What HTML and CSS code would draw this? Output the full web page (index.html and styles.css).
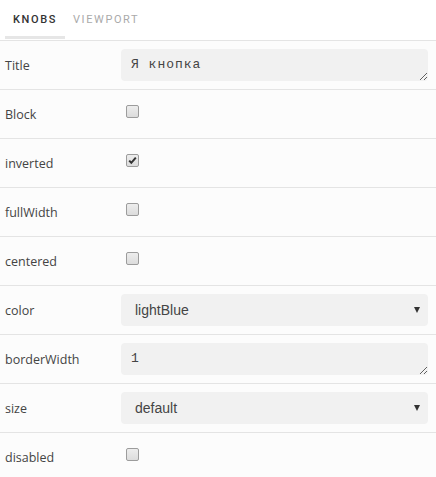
FILE: index.html
```html
<!DOCTYPE html>
<html>
<head>
<meta charset="utf-8">
<link rel="stylesheet" href="styles.css">
</head>
<body>
<div class="panel">
  <div class="tabs">
    <div class="tab active">KNOBS</div>
    <div class="tab">VIEWPORT</div>
  </div>
  <div class="knobs">
    <div class="row">
      <label class="label">Title</label>
      <div class="field"><textarea class="text" rows="1">Я кнопка</textarea></div>
    </div>
    <div class="row">
      <label class="label">Block</label>
      <div class="field"><span class="check"></span></div>
    </div>
    <div class="row">
      <label class="label">inverted</label>
      <div class="field"><span class="check checked"><svg viewBox="0 0 11 11" width="11" height="11"><path d="M2.2 5.6 L4.3 7.8 L8.8 2.6" fill="none" stroke="#333" stroke-width="2"/></svg></span></div>
    </div>
    <div class="row">
      <label class="label">fullWidth</label>
      <div class="field"><span class="check"></span></div>
    </div>
    <div class="row">
      <label class="label">centered</label>
      <div class="field"><span class="check"></span></div>
    </div>
    <div class="row">
      <label class="label">color</label>
      <div class="field"><div class="select"><span>lightBlue</span><span class="arrow"></span></div></div>
    </div>
    <div class="row">
      <label class="label">borderWidth</label>
      <div class="field"><textarea class="text" rows="1">1</textarea></div>
    </div>
    <div class="row">
      <label class="label">size</label>
      <div class="field"><div class="select"><span>default</span><span class="arrow"></span></div></div>
    </div>
    <div class="row">
      <label class="label">disabled</label>
      <div class="field"><span class="check"></span></div>
    </div>
  </div>
</div>
</body>
</html>
```

FILE: styles.css
```css
html, body {
  margin: 0;
  padding: 0;
  background: #fff;
}
.panel {
  width: 436px;
  font-family: "Open Sans", "Noto Sans", sans-serif;
}
.tabs {
  display: flex;
  height: 40px;
  padding-left: 5px;
  box-sizing: border-box;
}
.tab {
  height: 39px;
  box-sizing: border-box;
  padding: 13px 8px 0 8px;
  font-family: "Roboto", "Liberation Sans", sans-serif;
  font-size: 11px;
  font-weight: 400;
  letter-spacing: 1.6px;
  color: #aaa;
  border-bottom: 3px solid transparent;
}
.tab.active {
  color: #333;
  font-weight: 500;
  border-bottom-color: #e6e6e6;
  width: 60px;
}
.knobs {
  background: #fcfcfc;
}
.row {
  display: flex;
  align-items: center;
  height: 49px;
  box-sizing: border-box;
  border-top: 1px solid #e4e4e4;
}
.label {
  width: 121px;
  padding-left: 5px;
  box-sizing: border-box;
  font-size: 12.5px;
  color: #444;
}
.field {
  width: 307px;
  display: flex;
  align-items: center;
}
.text {
  display: block;
  width: 307px;
  height: 32px;
  box-sizing: border-box;
  border: none;
  border-radius: 4px;
  background: #f1f1f1;
  padding: 8px 10px;
  font-family: "Liberation Mono", "DejaVu Sans Mono", monospace;
  font-size: 13px;
  letter-spacing: 1px;
  color: #444;
  outline: none;
  resize: vertical;
  margin-top: -1px;
}
.check {
  display: inline-flex;
  align-items: center;
  justify-content: center;
  width: 11px;
  height: 11px;
  margin-left: 5px;
  margin-top: -5px;
  border: 1px solid #9c9c9c;
  border-radius: 2px;
  background: linear-gradient(#ededed, #dcdcdc);
}
.check svg {
  display: block;
}
.select {
  display: flex;
  align-items: center;
  justify-content: space-between;
  width: 307px;
  height: 32px;
  box-sizing: border-box;
  border-radius: 4px;
  background: #f1f1f1;
  padding: 0 8px 0 14px;
  font-family: "Liberation Sans", Arial, sans-serif;
  font-size: 14px;
  color: #444;
  margin-top: -1px;
}
.arrow {
  width: 0;
  height: 0;
  border-left: 3.5px solid transparent;
  border-right: 3.5px solid transparent;
  border-top: 6px solid #333;
  margin-top: 1px;
}
```
